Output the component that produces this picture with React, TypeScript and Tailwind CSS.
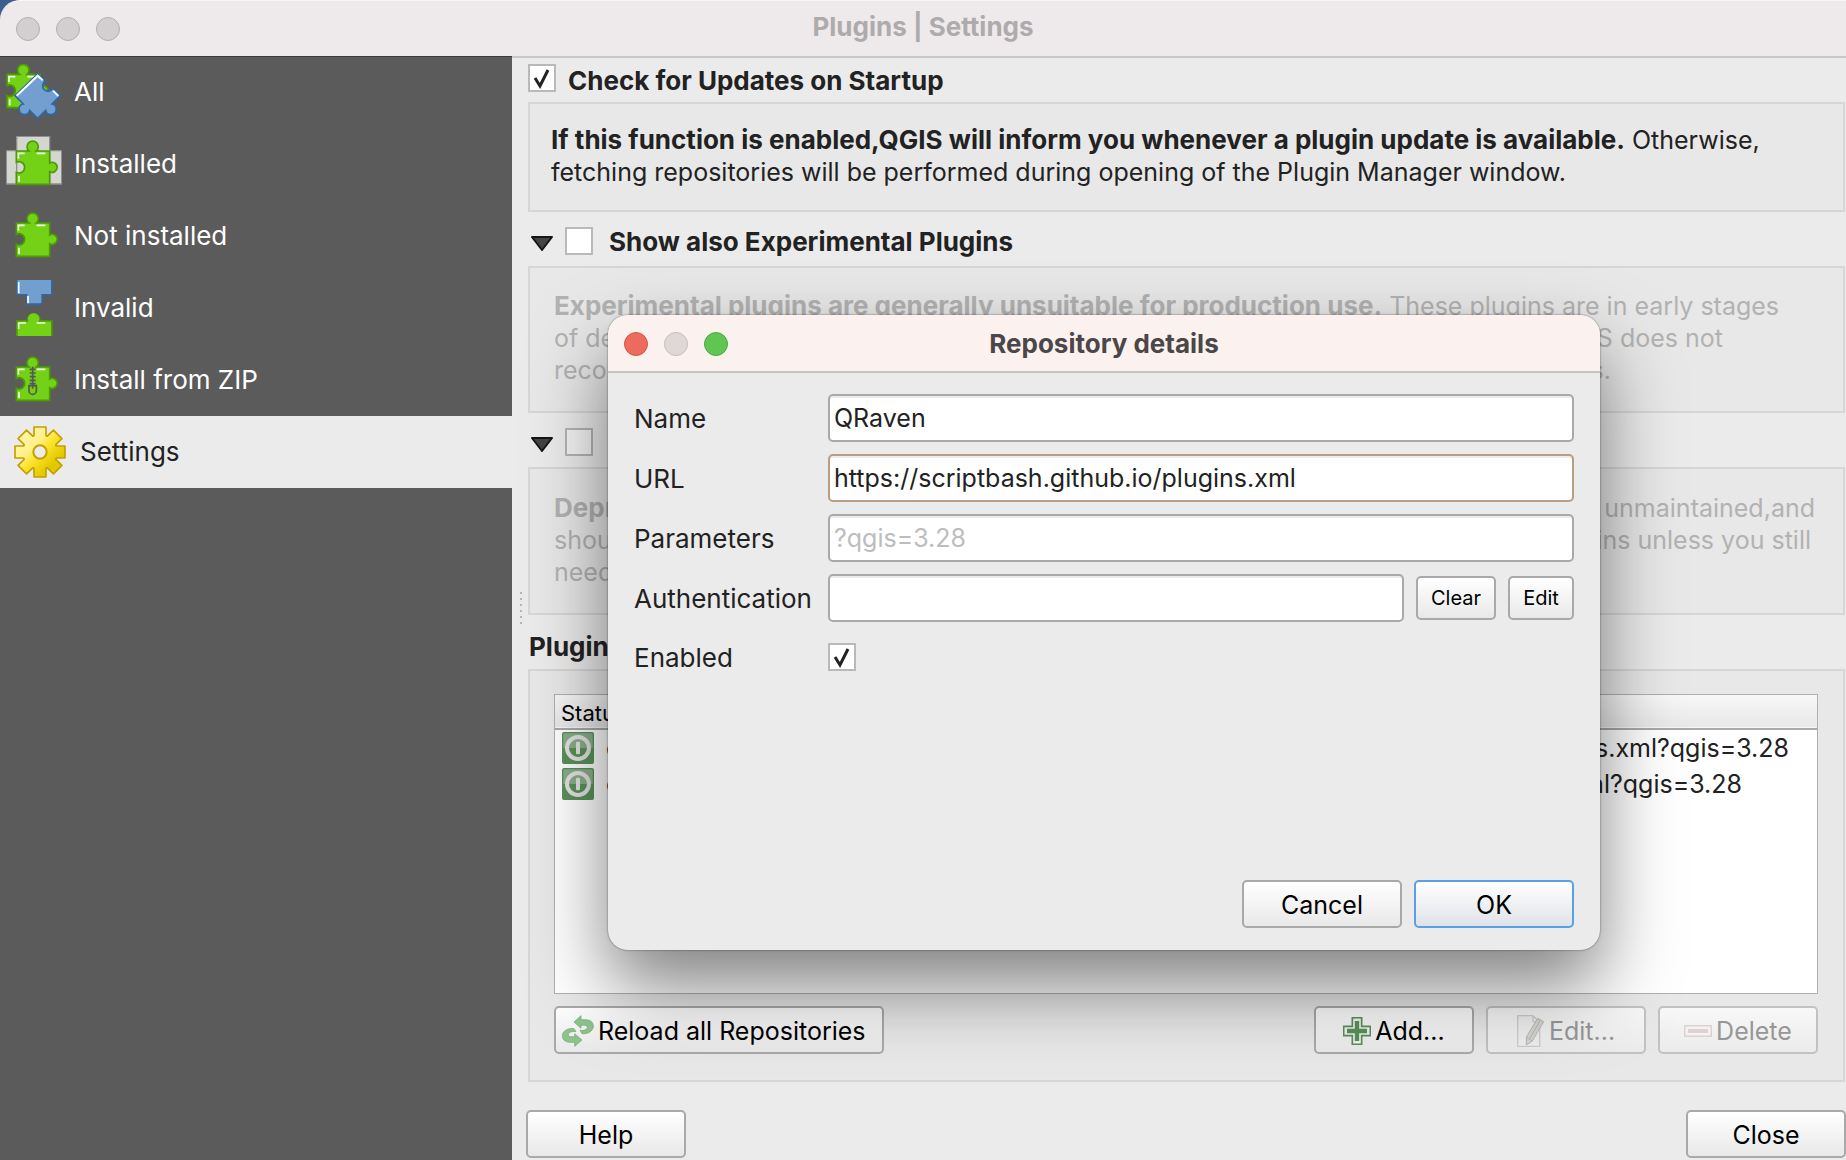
import React from "react";

const PIECE =
  "M31 45H69A17 17 0 1 1 91 45H131V81A15 15 0 1 1 131 107V145H31V109A17 17 0 1 0 31 79Z";

function Highlights() {
  return (
    <path d="M37 68V52H56M92 52H118M39 120V138" fill="none" stroke="#f4fbe9" strokeWidth="5" />
  );
}

function Piece() {
  return (
    <>
      <path d={PIECE} fill="#73d216" stroke="#4e9a06" strokeWidth="5" />
      <Highlights />
    </>
  );
}

function AllIcon() {
  return (
    <svg viewBox="0 0 168 168" className="size-14 shrink-0" aria-hidden="true">
      <g transform="translate(-28 -14)">
        <Piece />
      </g>
      <path
        d="M95 30L119 51A16 16 0 1 0 140 73L163 95L138 120A16 16 0 1 1 119 139L95 163L71 139A16 16 0 1 1 52 120L27 95Z"
        fill="#729fcf"
        stroke="#2f65ab"
        strokeWidth="5"
      />
      <path d="M32 95L95 35L110 49M141 80L157 96" fill="none" stroke="#fff" strokeWidth="6" />
    </svg>
  );
}

function InstalledIcon() {
  return (
    <svg viewBox="0 0 168 168" className="size-14 shrink-0" aria-hidden="true">
      <path d="M1 44H32V1H131V44H167V144H1Z" fill="#d3d7cf" stroke="#8d918a" strokeWidth="4" />
      <path d="M32 44V144M131 44V144" stroke="#8d918a" strokeWidth="4" />
      <Piece />
    </svg>
  );
}

function NotInstalledIcon() {
  return (
    <svg viewBox="0 0 168 168" className="size-14 shrink-0" aria-hidden="true">
      <Piece />
    </svg>
  );
}

function InvalidIcon() {
  return (
    <svg viewBox="0 0 168 168" className="size-14 shrink-0" aria-hidden="true">
      <path d="M30 0H140V46H110V75H60V46H30Z" fill="#3465a4" />
      <path d="M35 0H135V42H106V70H64V42H35Z" fill="#729fcf" />
      <path d="M38 6V40M66 48V70" stroke="#fff" strokeWidth="5" />
      <path d="M30 168V120H62A21 21 0 1 1 104 120H140V168Z" fill="#4e9a06" />
      <path d="M35 168V125H68A17 17 0 1 1 98 125H135V168Z" fill="#73d216" />
      <path d="M38 146V129H60M92 129H118" fill="none" stroke="#f4fbe9" strokeWidth="5" />
    </svg>
  );
}

function ZipIcon() {
  return (
    <svg viewBox="0 0 168 168" className="size-14 shrink-0" aria-hidden="true">
      <Piece />
      <path
        d="M80 44V100M71 52H89M71 63H89M71 74H89M71 85H89M71 95H89"
        stroke="#555753"
        strokeWidth="5"
      />
      <path d="M69 101H91V116A11 11 0 0 1 69 116Z" fill="#73d216" stroke="#555753" strokeWidth="5" />
      <path d="M80 100V110" stroke="#555753" strokeWidth="5" />
    </svg>
  );
}

function GearIcon() {
  const teeth = [0, 45, 90, 135, 180, 225, 270, 315];
  const points = teeth
    .flatMap((deg) => {
      const a = (deg * Math.PI) / 180;
      const turn = (x: number, y: number) =>
        `${(102 + x * Math.cos(a) - y * Math.sin(a)).toFixed(1)},${(
          84 + x * Math.sin(a) + y * Math.cos(a)
        ).toFixed(1)}`;
      return [turn(-18, -49), turn(-18, -75), turn(18, -75), turn(18, -49)];
    })
    .join(" ");
  return (
    <svg viewBox="0 0 186 168" className="h-14 w-[62px] shrink-0" aria-hidden="true">
      <defs>
        <linearGradient id="gear" x1="0" y1="0" x2="1" y2="1">
          <stop offset="0.1" stopColor="#fff6b0" />
          <stop offset="0.38" stopColor="#fdf08a" />
          <stop offset="0.5" stopColor="#fce62f" />
          <stop offset="0.75" stopColor="#e2c800" />
        </linearGradient>
      </defs>
      <polygon points={points} fill="url(#gear)" stroke="#c4a000" strokeWidth="5" strokeLinejoin="round" />
      <circle cx="102" cy="84" r="20" fill="#ebebeb" stroke="#c4a000" strokeWidth="6" />
    </svg>
  );
}

function ConnectedIcon() {
  return (
    <svg viewBox="0 0 96 96" className="size-8" role="img" aria-label="Connected">
      <rect width="96" height="96" rx="6" fill="#5a915a" />
      <path d="M4 48V8A4 4 0 0 1 8 4H88A4 4 0 0 1 92 8V48Z" fill="#8aae8a" />
      <circle cx="48" cy="48" r="33" fill="none" stroke="#e2e2e2" strokeWidth="12" />
      <rect x="42" y="29" width="12" height="38" rx="4" fill="#e2e2e2" />
    </svg>
  );
}

function ReloadIcon() {
  return (
    <svg viewBox="0 0 96 96" className="size-8" aria-hidden="true">
      <g fill="#8fc38f" stroke="#6ea86e" strokeWidth="2" strokeLinejoin="round">
        <path d="M36 21L57 2V14H70C88 14 95 24 94 36C92 48 78 58 60 56L54 46C66 48 76 43 76 37C76 32 70 30 64 31H57V40Z" />
        <path d="M60 75L38 94V82H26C8 82 0 72 1 60C3 48 18 38 36 41L42 50C29 48 19 53 19 59C19 64 25 66 31 65H38V56Z" />
      </g>
    </svg>
  );
}

function AddIcon() {
  return (
    <svg viewBox="0 0 84 84" className="size-7" aria-hidden="true">
      <path d="M28 2H56V28H82V56H56V82H28V56H2V28H28Z" fill="#eef3ee" stroke="#5a8f5a" strokeWidth="5" />
      <path d="M42 12V72M12 42H72" stroke="#5a8f5a" strokeWidth="13" />
    </svg>
  );
}

function EditIcon() {
  return (
    <svg viewBox="0 0 84 96" className="h-8 w-7" aria-hidden="true">
      <path d="M2 2H48L68 22V94H2Z" fill="#efefef" stroke="#cdcdcd" strokeWidth="4" />
      <path d="M48 2V20H66" fill="none" stroke="#cdcdcd" strokeWidth="4" />
      <path d="M62 10L80 20L46 78L28 90V66Z" fill="#d6d5d1" stroke="#b9b8b4" strokeWidth="3" />
      <path d="M70 15L38 72M28 66L46 78" stroke="#b9b8b4" strokeWidth="3" />
    </svg>
  );
}

function DeleteIcon() {
  return (
    <svg viewBox="0 0 84 36" className="h-3 w-7" aria-hidden="true">
      <rect x="2" y="2" width="80" height="32" fill="#f5f2f2" stroke="#ddd1d1" strokeWidth="5" />
      <rect x="12" y="12" width="60" height="12" fill="#ddd1d1" />
    </svg>
  );
}

const NAV = [
  { label: "All", icon: <AllIcon /> },
  { label: "Installed", icon: <InstalledIcon /> },
  { label: "Not installed", icon: <NotInstalledIcon /> },
  { label: "Invalid", icon: <InvalidIcon /> },
  { label: "Install from ZIP", icon: <ZipIcon /> },
  { label: "Settings", icon: <GearIcon />, active: true },
];

function Check({ id, checked = false, dim = false }: { id: string; checked?: boolean; dim?: boolean }) {
  return (
    <span className="relative block size-7 shrink-0">
      <input
        id={id}
        type="checkbox"
        defaultChecked={checked}
        className={
          dim
            ? "peer block size-7 appearance-none border-2 border-[#b4b4b4] bg-[#f4f4f4]"
            : "peer block size-7 appearance-none border-2 border-[#b9b9b9] bg-white"
        }
      />
      <svg
        viewBox="0 0 28 28"
        className="pointer-events-none absolute inset-0 hidden size-7 peer-checked:block"
        aria-hidden="true"
      >
        <path d="M7 14L12 22L20 6" fill="none" stroke="#222" strokeWidth="3" />
      </svg>
    </span>
  );
}

function Triangle() {
  return (
    <svg viewBox="0 0 22 15" className="mt-1 h-[15px] w-[22px]" aria-hidden="true">
      <path d="M1 1H21L11 14Z" fill="#444" stroke="#151515" strokeWidth="2" strokeLinejoin="round" />
    </svg>
  );
}

function CollapsibleTitle({ id, label, dim = false }: { id: string; label: string; dim?: boolean }) {
  return (
    <div className="flex h-[54px] items-center pl-[3px] pt-1">
      <Triangle />
      <div className="ml-3 flex items-center gap-4">
        <Check id={id} dim={dim} />
        <label htmlFor={id} className="pt-0.5 text-[26px] font-bold">
          {label}
        </label>
      </div>
    </div>
  );
}

function Button({
  children,
  variant = "normal",
  size = "wide",
}: {
  children: React.ReactNode;
  variant?: "normal" | "primary" | "disabled";
  size?: "wide" | "fit" | "small" | "tiny";
}) {
  const look = {
    normal: "border-[#a9a9a9] bg-linear-to-b from-white to-[#e9e9e9] text-black",
    primary: "border-[#5a9fe8] bg-linear-to-b from-white to-[#dfe3e9] text-black",
    disabled: "border-[#c2c2c2] bg-linear-to-b from-[#f8f8f8] to-[#ebebeb] text-[#979797]",
  }[variant];
  const dims = {
    wide: "h-12 w-40 pt-0.5",
    fit: "h-12 pl-1.5 pr-4 pt-0.5",
    small: "h-11 w-20 text-xl",
    tiny: "h-11 w-[66px] text-xl",
  }[size];
  return (
    <button
      type="button"
      disabled={variant === "disabled"}
      className={`flex shrink-0 items-center justify-center gap-1 whitespace-nowrap rounded-[5px] border-2 ${dims} ${look}`}
    >
      {children}
    </button>
  );
}

const GROUP = "mr-px border-2 border-[#d6d6d6] bg-[#e8e8e8]";
const FIELD =
  "h-12 min-w-0 flex-1 rounded-[5px] border-2 bg-white px-1 text-[#222] placeholder:text-[#bdbdbd] shadow-[inset_0_2px_0_#ececec] outline-none";

function Row({ id, label, children }: { id: string; label: string; children: React.ReactNode }) {
  return (
    <div className="flex items-center">
      <label htmlFor={id} className="w-[194px] shrink-0 pt-0.5 text-[26px] text-[#222]">
        {label}
      </label>
      <div className="flex min-w-0 flex-1 items-center gap-3">{children}</div>
    </div>
  );
}

function RepositoryDialog() {
  return (
    <section
      role="dialog"
      aria-labelledby="dialog-title"
      className="absolute left-[608px] top-[315px] w-[992px] overflow-hidden rounded-[20px] bg-[#ebebeb] shadow-[0_0_2px_rgba(0,0,0,0.6),0_36px_76px_rgba(0,0,0,0.5)]"
    >
      <header className="relative flex h-[58px] items-center gap-4 border-b-2 border-[#c9c4c4] bg-[#fbf2f0] px-4 pt-px">
        <button type="button" aria-label="Close dialog" className="size-6 rounded-full border border-[#d3544a] bg-[#ed6a5e]" />
        <button type="button" aria-label="Minimize dialog" className="size-6 rounded-full border border-[#c6bdbc] bg-[#e0d8d7]" />
        <button type="button" aria-label="Zoom dialog" className="size-6 rounded-full border border-[#4fa73f] bg-[#61c554]" />
        <h2 id="dialog-title" className="pointer-events-none absolute inset-x-0 text-center text-[26px] font-bold text-[#4b4647]">
          Repository details
        </h2>
      </header>
      <form className="flex flex-col gap-3 px-[26px] pb-[22px] pt-[21px]" onSubmit={(e) => e.preventDefault()}>
        <Row id="name" label="Name">
          <input id="name" defaultValue="QRaven" className={`${FIELD} border-[#a9a9a9]`} />
        </Row>
        <Row id="url" label="URL">
          <input id="url" defaultValue="https://scriptbash.github.io/plugins.xml" className={`${FIELD} border-[#b99e85]`} />
        </Row>
        <Row id="parameters" label="Parameters">
          <input id="parameters" placeholder="?qgis=3.28" className={`${FIELD} border-[#a9a9a9]`} />
        </Row>
        <Row id="authentication" label="Authentication">
          <input id="authentication" className={`${FIELD} border-[#a9a9a9]`} />
          <Button size="small">Clear</Button>
          <Button size="tiny">Edit</Button>
        </Row>
        <div className="h-12 pt-1.5">
          <Row id="enabled" label="Enabled">
            <Check id="enabled" checked />
          </Row>
        </div>
        <div className="flex justify-end gap-3 pt-[186px]">
          <Button>Cancel</Button>
          <Button variant="primary">OK</Button>
        </div>
      </form>
    </section>
  );
}

export default function App() {
  return (
    <div className="relative flex min-h-screen flex-col bg-[#ebebeb] font-[Inter,'Liberation_Sans',sans-serif] text-[25px] leading-8 text-[#222]">
      <div className="bg-[#3d5f8c]">
        <header className="relative flex h-14 items-center gap-4 rounded-tl-[20px] border-t border-[#f8f6f6] bg-[#eeeaeb] px-4">
          <button type="button" aria-label="Close window" className="size-6 rounded-full border border-[#b3afb0] bg-[#d3cfd0]" />
          <button type="button" aria-label="Minimize window" className="size-6 rounded-full border border-[#b3afb0] bg-[#d3cfd0]" />
          <button type="button" aria-label="Zoom window" className="size-6 rounded-full border border-[#b3afb0] bg-[#d3cfd0]" />
          <h1 className="pointer-events-none absolute inset-x-0 top-2.5 text-center text-[26px] font-bold text-[#aeabac]">
            Plugins | Settings
          </h1>
        </header>
      </div>

      <div className="flex flex-1">
        <nav className="w-[512px] shrink-0 bg-[#5b5b5b] text-[26px] shadow-[inset_0_1px_0_#3a3a3a]">
          <ul>
            {NAV.map((item) => (
              <li key={item.label}>
                <a
                  href="#"
                  aria-current={item.active ? "page" : undefined}
                  className={
                    item.active
                      ? "flex h-[72px] items-center gap-3 bg-[#ebebeb] pl-1.5 text-[#222]"
                      : "flex h-[72px] items-center gap-3 pl-1.5 text-white"
                  }
                >
                  {item.icon}
                  {item.label}
                </a>
              </li>
            ))}
          </ul>
        </nav>

        <div className="flex w-4 shrink-0 items-center border-t-2 border-[#c8c6c6]">
          <span className="ml-2 h-[34px] w-0.5 bg-[repeating-linear-gradient(#b5b5b5_0_2px,transparent_2px_6px)]" />
        </div>

        <main className="flex min-w-0 flex-1 flex-col border-t-2 border-[#c8c6c6]">
          <div className="flex h-11 items-center gap-3 pb-1">
            <Check id="updates" checked />
            <label htmlFor="updates" className="pt-1.5 text-[26px] font-bold">
              Check for Updates on Startup
            </label>
          </div>
          <div className={`${GROUP} h-[110px] px-[21px] pt-5`}>
            <p className="whitespace-nowrap">
              <b className="text-[26px]">
                If this function is enabled,QGIS will inform you whenever a plugin update is available.
              </b>{" "}
              Otherwise,
              <br />
              fetching repositories will be performed during opening of the Plugin Manager window.
            </p>
          </div>

          <CollapsibleTitle id="experimental" label="Show also Experimental Plugins" />
          <div className={`${GROUP} h-[147px] px-6 pt-[22px] text-[#b2b2b2]`}>
            <p className="whitespace-nowrap">
              <b className="text-[26px]">Experimental plugins are generally unsuitable for production use.</b> These
              plugins are in early stages
            </p>
            <p className="flex justify-between pr-24">
              <span>of development, and should be</span>
              <span>considered as tools. QGIS does not</span>
            </p>
            <p className="flex justify-between pr-52">
              <span>recommend installing these</span>
              <span>plugins for testing purposes.</span>
            </p>
          </div>

          <CollapsibleTitle id="deprecated" label="Show also Deprecated Plugins" dim />
          <div className={`${GROUP} h-[148px] px-6 pt-[23px] text-[#b2b2b2]`}>
            <p className="flex justify-between pr-1">
              <b className="text-[26px]">Deprecated plugins are generally</b>
              <span>These plugins are unmaintained,and</span>
            </p>
            <p className="flex justify-between pr-2">
              <span>should be considered 'obsolete'</span>
              <span>installing these plugins unless you still</span>
            </p>
            <p>need it and there are no other alternatives.</p>
          </div>

          <h2 className="flex h-[54px] items-end pb-1.5 pl-px text-[26px] font-bold">Plugin Repositories</h2>
          <div className={`${GROUP} flex flex-1 flex-col gap-3 pb-[26px] pl-6 pr-[25px] pt-[23px]`}>
            <div className="h-[300px] overflow-hidden border border-[#b0b0b0] bg-white">
              <table className="w-full border-collapse">
                <thead>
                  <tr className="h-[34px] border-b-2 border-[#a9a9a9] bg-linear-to-b from-[#f8f8f8] to-[#e8e8e8] text-left text-[22px] text-black">
                    <th className="w-60 pl-1.5 pt-0.5 font-normal leading-7">Status</th>
                    <th className="pt-0.5 font-normal leading-7">Name</th>
                    <th className="pt-0.5 font-normal leading-7">URL</th>
                  </tr>
                </thead>
                <tbody>
                  <tr className="h-9">
                    <td className="flex h-9 items-center gap-3 pl-[7px]">
                      <ConnectedIcon />
                      connected
                    </td>
                    <td>QGIS Official Repository</td>
                    <td className="pr-7 text-right">https://plugins.qgis.org/plugins/plugins.xml?qgis=3.28</td>
                  </tr>
                  <tr className="h-9">
                    <td className="flex h-9 items-center gap-3 pl-[7px]">
                      <ConnectedIcon />
                      connected
                    </td>
                    <td>QRaven</td>
                    <td className="pr-[75px] text-right">https://scriptbash.github.io/plugins.xml?qgis=3.28</td>
                  </tr>
                </tbody>
              </table>
            </div>
            <div className="flex gap-3">
              <Button size="fit">
                <ReloadIcon />
                Reload all Repositories
              </Button>
              <div className="flex-1" />
              <Button>
                <AddIcon />
                Add...
              </Button>
              <Button variant="disabled">
                <EditIcon />
                Edit...
              </Button>
              <Button variant="disabled">
                <DeleteIcon />
                Delete
              </Button>
            </div>
          </div>

          <footer className="-ml-0.5 flex justify-between pb-0.5 pt-7">
            <Button>Help</Button>
            <Button>Close</Button>
          </footer>
        </main>
      </div>

      <RepositoryDialog />
    </div>
  );
}
